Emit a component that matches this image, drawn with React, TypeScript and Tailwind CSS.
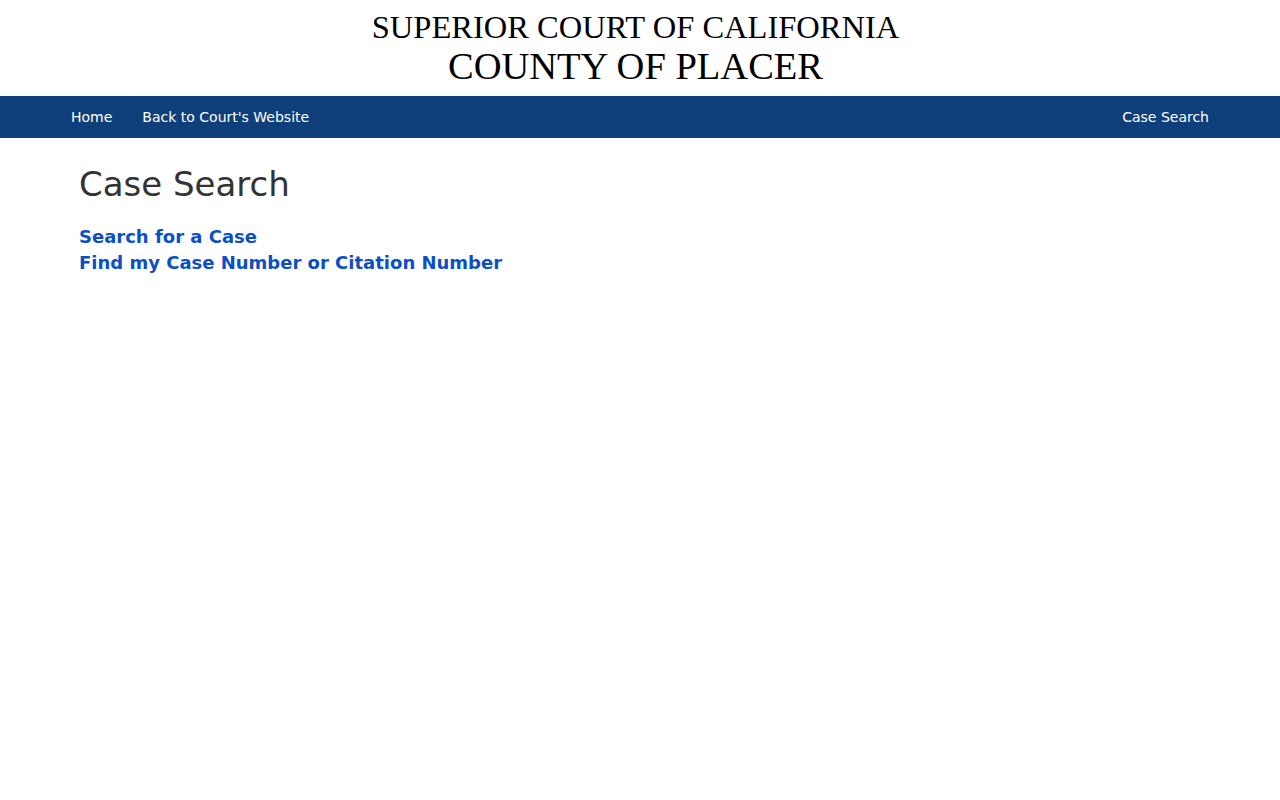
export default function App() {
  return (
    <div className="min-h-screen bg-white font-['DejaVu_Sans',sans-serif]">
      <header className="h-[96px] flex flex-col items-center font-['Liberation_Serif',serif] text-black">
        <div className="mr-[9px] mt-[8px] text-[32.5px] leading-[38px] whitespace-nowrap">SUPERIOR COURT OF CALIFORNIA</div>
        <div className="mr-[9px] -mt-[1px] text-[38.5px] leading-[42px] whitespace-nowrap">COUNTY OF PLACER</div>
      </header>
      <nav className="h-[42px] bg-[#0f3f7b] flex items-center justify-between pl-[71px] pr-[71px] text-[14px] text-white">
        <div className="flex gap-[30px]">
          <a>Home</a>
          <a>Back to Court's Website</a>
        </div>
        <a>Case Search</a>
      </nav>
      <main className="pl-[79px] pt-[23px]">
        <h1 className="text-[34px] leading-[46px] text-[#333333]">Case Search</h1>
        <div className="mt-[17px] text-[18px] leading-[26px] font-bold text-[#0b4fc4]">
          <div>Search for a Case</div>
          <div>Find my Case Number or Citation Number</div>
        </div>
      </main>
    </div>
  );
}
